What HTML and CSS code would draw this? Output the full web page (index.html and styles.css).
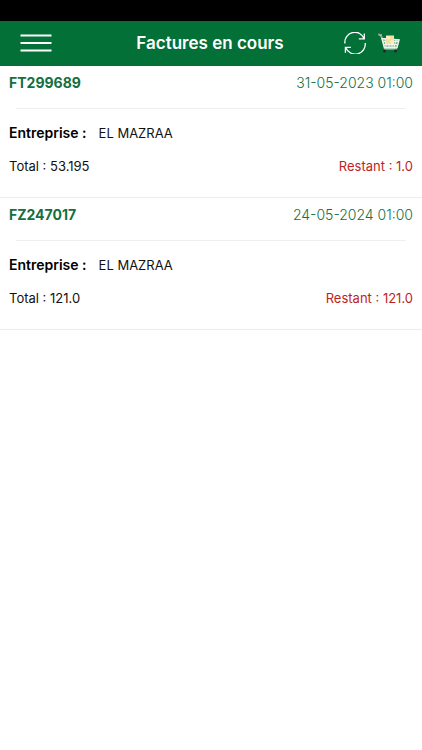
FILE: index.html
```html
<!DOCTYPE html>
<html lang="fr">
<head>
<meta charset="utf-8">
<meta name="viewport" content="width=device-width, initial-scale=1">
<title>Factures en cours</title>
<link rel="stylesheet" href="styles.css">
</head>
<body>
<header class="app-bar">
  <button class="icon-button menu-button" type="button" aria-label="Menu">
    <svg width="32" height="18" viewBox="0 0 32 18" fill="none" stroke="currentColor" stroke-width="2"><path d="M.5 1.500H31.500M.5 9H31.500M.5 16.500H31.500"/></svg>
  </button>
  <h1 class="title">Factures en cours</h1>
  <div class="actions">
    <button class="icon-button" type="button" aria-label="Actualiser">
      <svg width="22" height="22" viewBox="0 0 22 22" fill="none" stroke="currentColor" stroke-width="1.300"><path d="M.9 11.500A10 10 0 0 1 20.200 6.800M20.300 1.500v5.400h-5.500M21.200 11A10 10 0 0 1 1.900 15.700M1.400 20.700v-5.300h5.500"/></svg>
    </button>
    <button class="icon-button" type="button" aria-label="Panier">
      <svg width="22" height="20" viewBox="0 0 22 20" fill="none">
        <path d="M3.500 5.500 20.500 7l-2 7.500H6z" fill="#dce9dc" fill-opacity=".55"/>
        <path d="M8 2.500h8v10H8z" fill="#f8dfa2"/>
        <path d="M8 3h4v3H8zM13 7h3v4h-3z" fill="#ffedc3"/>
        <path d="M7 6 8 14M11 12v2.500M18 7 16 14.500M14 12v2.500M4.500 8.500H8M16 8.500h4M5 11.500h14" stroke="#f3f3e9"/>
        <path d="M.5 1.500 3 2l3.500 13H19M3.800 5.500 8 5.800M16 6.500l5 .4-2 7.600H6.500" stroke="#f1f4ec" stroke-width="1.500"/>
        <path d="M0 1 3 1.500 4 5M6 16.500h12.500" stroke="#8a8f83"/>
        <circle cx="6.500" cy="18" r="1.500" fill="#292522"/><circle cx="17.500" cy="18" r="1.500" fill="#292522"/>
      </svg>
    </button>
  </div>
</header>
<main>
  <article class="invoice">
    <div class="row invoice-head"><h2 class="number">FT299689</h2><time datetime="2023-05-31T01:00">31-05-2023 01:00</time></div>
    <hr class="divider">
    <div class="company"><span class="label">Entreprise :</span><span>EL MAZRAA</span></div>
    <div class="row"><span>Total : 53.195</span><span class="due">Restant : 1.0</span></div>
  </article>
  <article class="invoice">
    <div class="row invoice-head"><h2 class="number">FZ247017</h2><time datetime="2024-05-24T01:00">24-05-2024 01:00</time></div>
    <hr class="divider">
    <div class="company"><span class="label">Entreprise :</span><span>EL MAZRAA</span></div>
    <div class="row"><span>Total : 121.0</span><span class="due">Restant : 121.0</span></div>
  </article>
</main>
</body>
</html>
```
FILE: styles.css
```css
* { box-sizing: border-box; }
body {
  margin: 0;
  background: #fff;
  color: #111;
  font-family: Inter, "Liberation Sans", sans-serif;
  font-size: 13px;
  line-height: 20px;
}
h1, h2 { margin: 0; }
.app-bar {
  display: grid;
  grid-template-columns: 1fr auto 1fr;
  align-items: center;
  padding: 11px 22px 12px 20px;
  border-top: 21px solid #000;
  background: #037037;
  color: #fff;
}
.icon-button {
  display: flex;
  padding: 0;
  border: 0;
  background: none;
  color: inherit;
}
.menu-button { justify-self: start; }
.title { font-size: 17px; font-weight: 600; }
.actions {
  display: flex;
  align-items: center;
  justify-content: flex-end;
  gap: 12px;
}
.invoice {
  padding: 7px 9px 21px;
  border-bottom: 1px solid #ececec;
}
.row {
  display: flex;
  justify-content: space-between;
}
.invoice-head {
  font-size: 14px;
  font-weight: 300;
  color: #137040;
}
.number { font-size: 14px; font-weight: 700; }
.divider {
  height: 1px;
  margin: 15px 7px 14px;
  border: 0;
  background: #efefef;
}
.company {
  display: flex;
  gap: 12px;
  margin-bottom: 13px;
}
.label { font-size: 14px; font-weight: 600; color: #000; }
.due { color: #c01f22; }
```
